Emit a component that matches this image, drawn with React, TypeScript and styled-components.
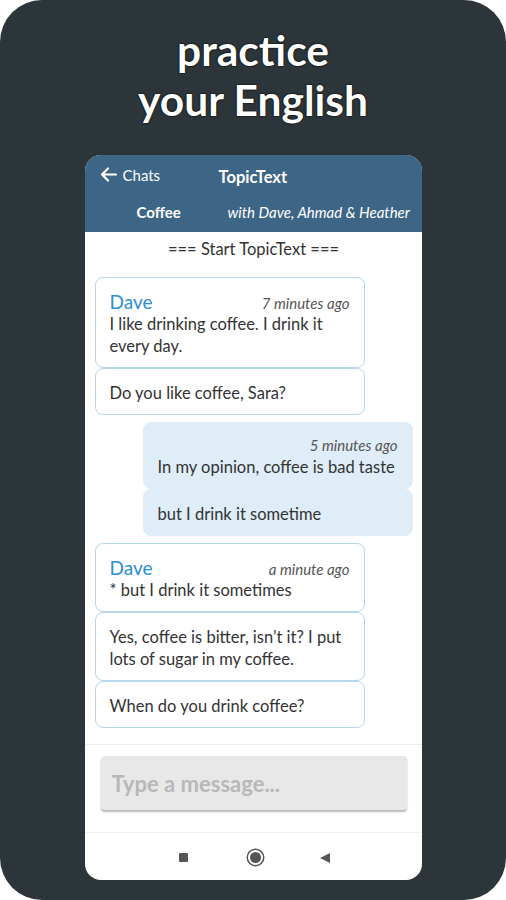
import styled, { createGlobalStyle } from "styled-components";

const GlobalStyle = createGlobalStyle`
  html, body {
    margin: 0;
    padding: 0;
    background: #ffffff;
  }
  * {
    box-sizing: border-box;
  }
`

type Part = { text: string[] }
type Group = {
  mine: boolean
  name?: string
  time: string
  parts: Part[]
}

const messages: Group[] = [
  {
    mine: false,
    name: 'Dave',
    time: '7 minutes ago',
    parts: [
      { text: ['I like drinking coffee. I drink it', 'every day.'] },
      { text: ['Do you like coffee, Sara?'] },
    ],
  },
  {
    mine: true,
    time: '5 minutes ago',
    parts: [
      { text: ['In my opinion, coffee is bad taste'] },
      { text: ['but I drink it sometime'] },
    ],
  },
  {
    mine: false,
    name: 'Dave',
    time: 'a minute ago',
    parts: [
      { text: ['* but I drink it sometimes'] },
      { text: ['Yes, coffee is bitter, isn\u2019t it? I put', 'lots of sugar in my coffee.'] },
      { text: ['When do you drink coffee?'] },
    ],
  },
]

function BackArrow() {
  return (
    <svg width="17" height="15" viewBox="0 0 17 15" fill="none">
      <path d="M16 7.5H2.5M8 1.5L2 7.5L8 13.5" stroke="#ffffff" strokeWidth="2.2" strokeLinecap="round" strokeLinejoin="round" />
    </svg>
  )
}

function App() {
  return (
    <>
      <GlobalStyle />
      <StyledPage>
        <StyledTitle>
          practice
          <br />
          your English
        </StyledTitle>
        <StyledScreen>
          <StyledHeader>
            <StyledHeaderRow>
              <StyledBack>
                <BackArrow />
                <span>Chats</span>
              </StyledBack>
              <StyledAppName>TopicText</StyledAppName>
            </StyledHeaderRow>
            <StyledHeaderRow>
              <StyledTopic>Coffee</StyledTopic>
              <StyledMembers>with Dave, Ahmad &amp; Heather</StyledMembers>
            </StyledHeaderRow>
          </StyledHeader>

          <StyledChat>
            <StyledStart>=== Start TopicText ===</StyledStart>
            {messages.map((group, gi) => (
              <StyledGroup key={gi} $mine={group.mine}>
                {group.parts.map((part, pi) => (
                  <StyledBubble key={pi} $mine={group.mine}>
                    {pi === 0 && (
                      <StyledMeta $hasName={!!group.name}>
                        {group.name && <StyledName>{group.name}</StyledName>}
                        <StyledTime>{group.time}</StyledTime>
                      </StyledMeta>
                    )}
                    {part.text.map((line, li) => (
                      <StyledLine key={li}>{line}</StyledLine>
                    ))}
                  </StyledBubble>
                ))}
              </StyledGroup>
            ))}
          </StyledChat>

          <StyledComposer>
            <StyledInput placeholder="Type a message..." />
          </StyledComposer>

          <StyledNav>
            <StyledSquare />
            <StyledHome />
            <StyledBackTriangle />
          </StyledNav>
        </StyledScreen>
      </StyledPage>
    </>
  )
}

const StyledPage = styled.div`
  width: 506px;
  height: 900px;
  background: #2b353a;
  border-radius: 42px;
  display: flex;
  flex-direction: column;
  align-items: center;
  padding-top: 25px;
  overflow: hidden;
`

const StyledTitle = styled.h1`
  margin: 0;
  font-family: Lato, "Open Sans", sans-serif;
  font-weight: 700;
  font-size: 42.5px;
  line-height: 50px;
  color: #ffffff;
  text-align: center;
  text-shadow: 0 0 2px #000000, 0 0 1px #000000;
`

const StyledScreen = styled.div`
  margin-top: 30px;
  width: 337px;
  height: 725px;
  background: #ffffff;
  border-radius: 16px;
  overflow: hidden;
  display: flex;
  flex-direction: column;
  font-family: Lato, "Open Sans", sans-serif;
`

const StyledHeader = styled.div`
  background: #3d6585;
  color: #ffffff;
  height: 77px;
  padding: 10px 0 0;
  display: flex;
  flex-direction: column;
  gap: 11px;
`

const StyledHeaderRow = styled.div`
  display: flex;
  align-items: center;
  height: 24px;
`

const StyledBack = styled.div`
  display: flex;
  align-items: center;
  gap: 6px;
  padding-left: 15px;
  width: 134px;
  font-size: 15px;
  margin-top: -5px;
`

const StyledAppName = styled.div`
  font-size: 16.5px;
  font-weight: 700;
`

const StyledTopic = styled.div`
  width: 143px;
  padding-left: 52px;
  font-size: 15px;
  font-weight: 700;
`

const StyledMembers = styled.div`
  font-size: 15px;
  font-style: italic;
  white-space: nowrap;
`

const StyledChat = styled.div`
  flex: 1;
  padding: 6px 9px 0 10px;
  display: flex;
  flex-direction: column;
  gap: 7px;
  border-bottom: 1px solid #ececec;
`

const StyledStart = styled.div`
  text-align: center;
  font-size: 16.5px;
  color: #333333;
  line-height: 22px;
  margin-bottom: 10px;
`

const StyledGroup = styled.div<{ $mine: boolean }>`
  width: 270px;
  align-self: ${p => (p.$mine ? 'flex-end' : 'flex-start')};
  display: flex;
  flex-direction: column;
`

const StyledBubble = styled.div<{ $mine: boolean }>`
  border: 1px solid ${p => (p.$mine ? '#deedf7' : '#b7d7ee')};
  background: ${p => (p.$mine ? '#deedf7' : '#ffffff')};
  border-radius: 8px;
  padding: 13px 14px 10px;
  & + & {
    margin-top: ${p => (p.$mine ? '0' : '-1px')};
  }
`

const StyledMeta = styled.div<{ $hasName: boolean }>`
  display: flex;
  align-items: baseline;
  justify-content: ${p => (p.$hasName ? 'space-between' : 'flex-end')};
  height: ${p => (p.$hasName ? '22px' : '20px')};
`

const StyledName = styled.span`
  font-size: 19px;
  color: #2b8fd2;
  line-height: 22px;
`

const StyledTime = styled.span`
  font-size: 15px;
  font-style: italic;
  color: #555555;
`

const StyledLine = styled.div`
  font-size: 16.5px;
  line-height: 22px;
  color: #333333;
  white-space: nowrap;
`

const StyledComposer = styled.div`
  height: 88px;
  padding: 11px 15px 0 16px;
  border-bottom: 1px solid #f0f0f0;
`

const StyledInput = styled.input`
  width: 100%;
  height: 54px;
  border: none;
  border-radius: 4px;
  background: #e8e8e8;
  box-shadow: 0 2px 2px rgba(0, 0, 0, 0.28);
  padding: 0 11px;
  font-family: Lato, "Open Sans", sans-serif;
  font-size: 22px;
  font-weight: 700;
  outline: none;
  &::placeholder {
    color: #b8b8b8;
  }
`

const StyledNav = styled.div`
  flex: 0 0 47px;
  display: flex;
  align-items: center;
  justify-content: center;
  padding: 2px 0 0 2px;
`

const StyledSquare = styled.div`
  width: 9px;
  height: 9px;
  background: #555555;
  border-radius: 1px;
  margin-right: 60px;
`

const StyledHome = styled.div`
  width: 15px;
  height: 15px;
  border-radius: 50%;
  background: #555555;
  border: 2.5px solid #ffffff;
  box-shadow: 0 0 0 1.5px #555555;
  margin-right: 57px;
`

const StyledBackTriangle = styled.div`
  width: 0;
  height: 0;
  border-top: 5.5px solid transparent;
  border-bottom: 5.5px solid transparent;
  border-right: 10px solid #555555;
`

export default App;
